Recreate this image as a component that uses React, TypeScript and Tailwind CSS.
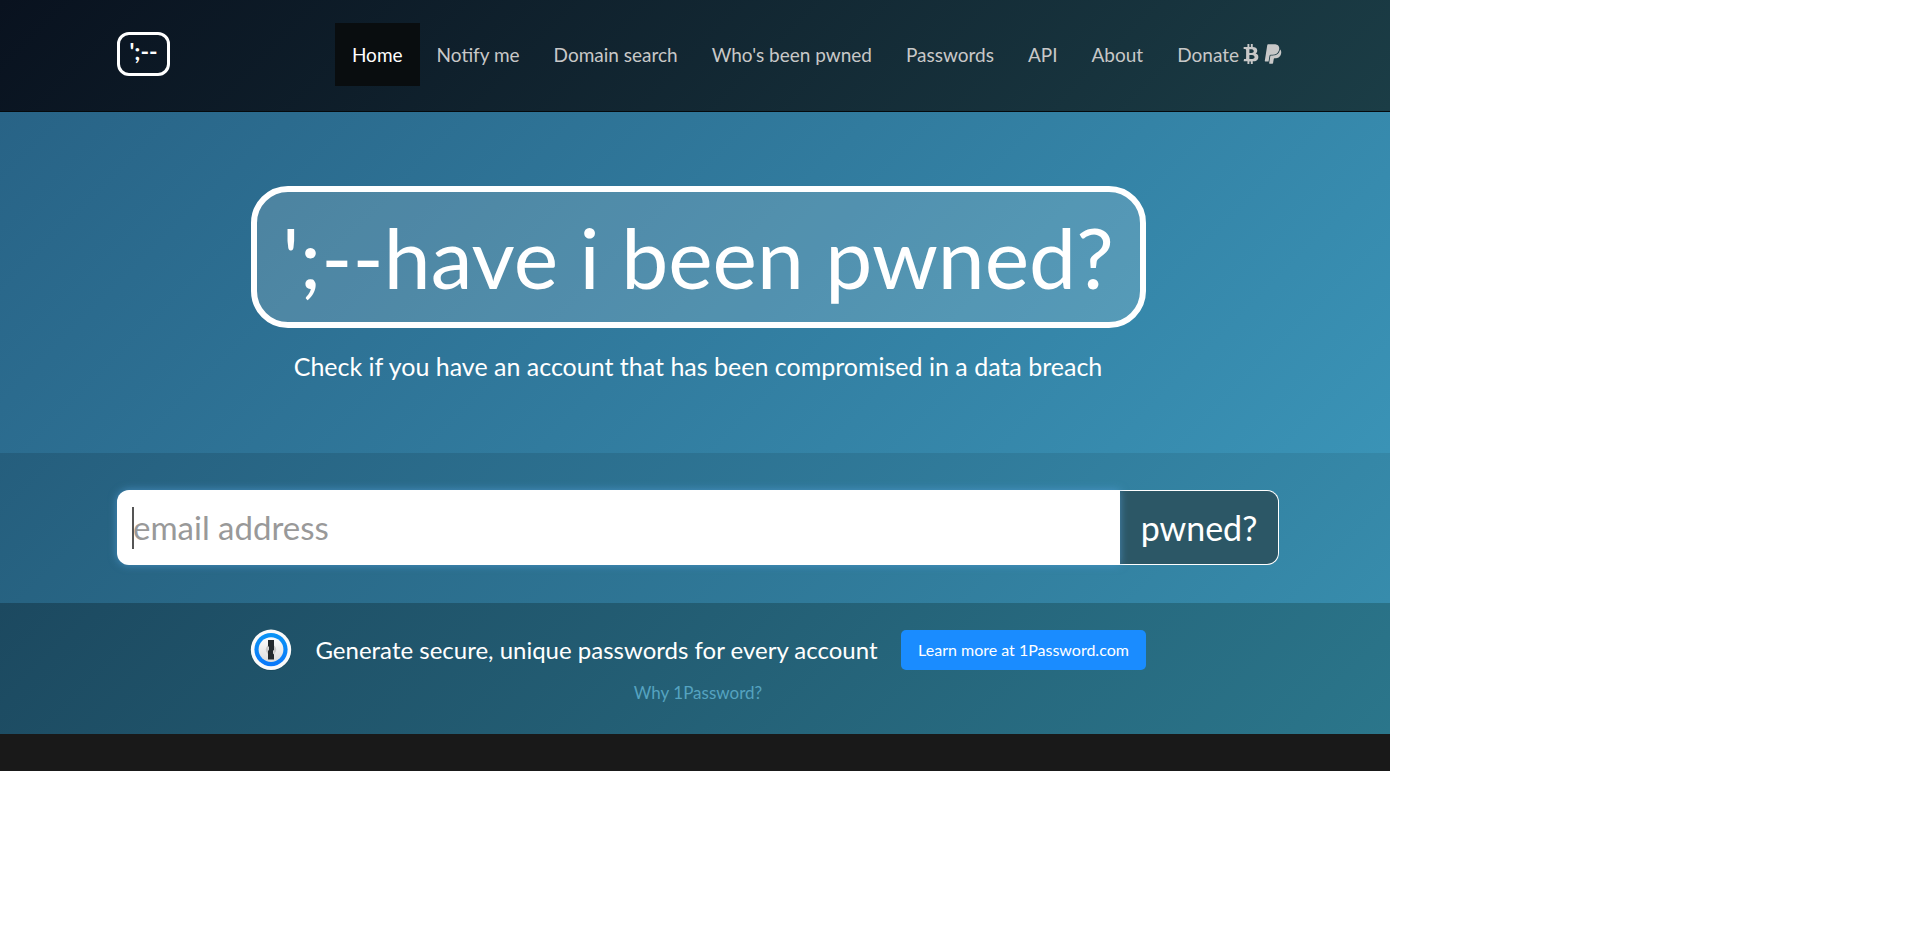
import { FaBtc, FaPaypal } from "react-icons/fa";

const links = [
  "Home",
  "Notify me",
  "Domain search",
  "Who's been pwned",
  "Passwords",
  "API",
  "About",
];

function OnePasswordLogo() {
  return (
    <svg viewBox="0 0 42 42" className="size-[42px] shrink-0" aria-hidden="true">
      <defs>
        <linearGradient id="ring" x1="0" y1="0" x2="0" y2="1">
          <stop offset="0" stopColor="#0a94f5" />
          <stop offset="1" stopColor="#0a78fa" />
        </linearGradient>
        <linearGradient id="face" x1="0" y1="0" x2="0" y2="1">
          <stop offset="0" stopColor="#fdfdfd" />
          <stop offset="1" stopColor="#dcdcdc" />
        </linearGradient>
      </defs>
      <circle cx="21" cy="21.4" r="20.4" fill="#123d50" opacity="0.5" />
      <circle cx="21" cy="20.8" r="20.2" fill="#fafafa" />
      <circle cx="21" cy="20.6" r="16.6" fill="url(#ring)" />
      <circle cx="21" cy="20.6" r="12.4" fill="url(#face)" />
      <circle cx="21" cy="20.6" r="5.2" fill="#c9c9c9" />
      <path
        d="M18 11h6v10l-0.900 1.200 0.900 1.200V30.500h-6v-8.500l0.900-1.200-0.900-1.200z"
        fill="#23292d"
      />
      <path d="M18 17l1 1v2.400l-1 1zM24 21l-1 1v2.400l1 1z" fill="#d6d6d6" />
    </svg>
  );
}

export default function App() {
  return (
    <div className="min-h-screen bg-white font-['Lato','Liberation_Sans',sans-serif] text-white">
      <div className="w-full max-w-[1390px]">
        <header className="flex h-28 items-start justify-between border-b border-[#050a0d] bg-linear-135 from-[#09121f] to-[#1b3d46] pr-[90px] pl-[117px]">
          <a
            href="#"
            aria-label="Have I Been Pwned"
            className="mt-8 flex h-11 w-[53px] justify-center rounded-xl border-3 border-white text-[23px] leading-8 font-bold"
          >
            ';--
          </a>
          <nav className="mt-[23px] flex text-[19px] leading-[63px] whitespace-nowrap text-[#c8c8c8]">
            {links.map((label) => (
              <a
                key={label}
                href="#"
                className={label === "Home" ? "bg-[#090d0f] px-[17px] text-white" : "px-[17px]"}
              >
                {label}
              </a>
            ))}
            <a href="#" className="flex items-center gap-1 px-[17px]">
              <span>Donate</span>
              <FaBtc className="mb-0.5 h-5 w-4" />
              <FaPaypal className="mb-0.5 h-[22px] w-5" />
            </a>
          </nav>
        </header>

        <main>
          <section className="flex flex-col items-center bg-linear-135 from-[#286386] to-[#3a93b6] pt-[74px] pr-[111px] pb-[69px] pl-[117px]">
            <h1 className="flex h-[142px] w-[895px] items-center justify-center rounded-[37px] border-6 border-white bg-white/16 text-[84px] leading-none whitespace-nowrap">
              ';--have i been pwned?
            </h1>
            <p className="mt-5 text-[25px] leading-9 whitespace-nowrap">
              Check if you have an account that has been compromised in a data breach
            </p>
          </section>

          <section className="bg-linear-135 from-[#255e7d] to-[#378cac] pt-[37px] pr-[111px] pb-[38px] pl-[117px]">
            <form className="relative flex h-[75px]" onSubmit={(e) => e.preventDefault()}>
              <input
                type="email"
                aria-label="email address"
                placeholder="email address"
                className="relative min-w-0 flex-1 rounded-l-xl bg-white px-4 text-[33px] text-[#555555] shadow-[0_0_8px_rgba(82,158,214,0.7)] outline-none placeholder:text-[#999999]"
              />
              <span className="absolute top-[17px] left-[15px] h-[42px] w-0.5 bg-[#555555]" />
              <button
                type="submit"
                className="w-[159px] rounded-r-xl border border-l-0 border-white bg-[#2c5766] text-[34px]"
              >
                pwned?
              </button>
            </form>
          </section>

          <section className="flex flex-col items-center bg-linear-135 from-[#1c4960] to-[#2b768b] pt-[26px] pr-[111px] pb-[30px] pl-[117px]">
            <div className="flex w-[896px] items-center justify-between whitespace-nowrap">
              <OnePasswordLogo />
              <p className="text-[24px] leading-9">
                Generate secure, unique passwords for every account
              </p>
              <a
                href="#"
                className="flex h-10 w-[245px] items-center justify-center rounded-[5px] bg-[#1a8cff] text-[16px]"
              >
                Learn more at 1Password.com
              </a>
            </div>
            <a href="#" className="mt-2.5 text-[17px] leading-[23px] text-[#55a3c0]">
              Why 1Password?
            </a>
          </section>
        </main>
        <footer className="h-[37px] bg-[#191919]" />
      </div>
    </div>
  );
}
